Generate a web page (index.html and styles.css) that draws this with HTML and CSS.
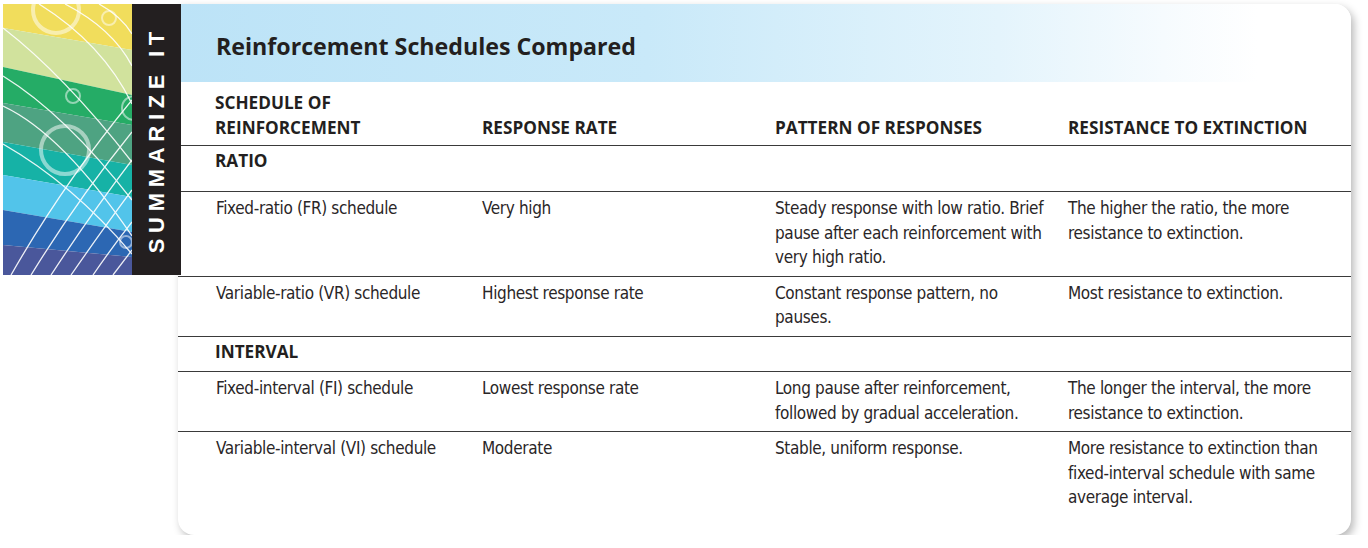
FILE: index.html
```html
<!DOCTYPE html>
<html lang="en">
<head>
<meta charset="utf-8">
<title>Reinforcement Schedules Compared</title>
<link rel="stylesheet" href="styles.css">
</head>
<body>
<div class="page">
  <aside class="badge">
    <svg class="art" viewBox="0 0 129 271" width="129" height="271" aria-hidden="true">
      <polygon fill="#f1dd5c" points="0,0 129,0 129,46 0,24"/>
      <polygon fill="#d1e29d" points="0,24 129,46 129,91 0,63"/>
      <polygon fill="#25ac66" points="0,63 129,91 129,121 0,99"/>
      <polygon fill="#4ea382" points="0,99 129,121 129,161 0,138"/>
      <polygon fill="#16b2a6" points="0,138 129,161 129,193 0,171"/>
      <polygon fill="#52c4ea" points="0,171 129,193 129,228 0,206"/>
      <polygon fill="#2c67b3" points="0,206 129,228 129,253 0,241"/>
      <polygon fill="#4a579b" points="0,241 129,253 129,271 0,271"/>
      <g fill="none" stroke="#fff" stroke-width="1.3" opacity="0.9">
        <path d="M0 24 Q 60 70 129 158"/>
        <path d="M0 72 Q 62 110 129 196"/>
        <path d="M0 102 Q 60 130 129 232"/>
        <path d="M0 140 Q 70 180 129 250"/>
        <path d="M36 0 Q 100 40 129 100"/>
        <path d="M62 0 Q 110 25 129 62"/>
        <path d="M96 0 Q 118 12 129 30"/>
        <path d="M8 271 Q 60 180 129 96"/>
        <path d="M28 271 Q 75 195 129 128"/>
        <path d="M48 271 Q 88 210 129 156"/>
        <path d="M68 271 Q 100 225 129 186"/>
        <path d="M90 271 Q 110 242 129 218"/>
        <path d="M110 271 L 129 246"/>
      </g>
      <g fill="none" stroke="#fff" opacity="0.5">
        <circle cx="53" cy="6" r="23" stroke-width="4"/>
        <circle cx="62" cy="146" r="24" stroke-width="4"/>
        <circle cx="106" cy="14" r="7" stroke-width="2"/>
        <circle cx="70" cy="92" r="7" stroke-width="2"/>
        <circle cx="131" cy="104" r="12" stroke-width="2"/>
        <circle cx="123" cy="238" r="6" stroke-width="2"/>
      </g>
    </svg>
    <div class="bar"><span class="bar-text">SUMMARIZE IT</span></div>
  </aside>
  <section class="card">
    <header class="band"><h1 class="title">Reinforcement Schedules Compared</h1></header>
    <table class="grid">
      <colgroup><col class="c1"><col class="c2"><col class="c3"><col class="c4"></colgroup>
      <thead>
        <tr>
          <th>SCHEDULE OF<br>REINFORCEMENT</th>
          <th>RESPONSE RATE</th>
          <th>PATTERN OF RESPONSES</th>
          <th>RESISTANCE TO EXTINCTION</th>
        </tr>
      </thead>
      <tbody>
        <tr class="group g-ratio"><td colspan="4">RATIO</td></tr>
        <tr>
          <td>Fixed-ratio (FR) schedule</td>
          <td>Very high</td>
          <td>Steady response with low ratio. Brief<br>pause after each reinforcement with<br>very high ratio.</td>
          <td>The higher the ratio, the more<br>resistance to extinction.</td>
        </tr>
        <tr>
          <td>Variable-ratio (VR) schedule</td>
          <td>Highest response rate</td>
          <td>Constant response pattern, no<br>pauses.</td>
          <td>Most resistance to extinction.</td>
        </tr>
        <tr class="group g-interval"><td colspan="4">INTERVAL</td></tr>
        <tr>
          <td>Fixed-interval (FI) schedule</td>
          <td>Lowest response rate</td>
          <td>Long pause after reinforcement,<br>followed by gradual acceleration.</td>
          <td>The longer the interval, the more<br>resistance to extinction.</td>
        </tr>
        <tr>
          <td>Variable-interval (VI) schedule</td>
          <td>Moderate</td>
          <td>Stable, uniform response.</td>
          <td>More resistance to extinction than<br>fixed-interval schedule with same<br>average interval.</td>
        </tr>
      </tbody>
    </table>
  </section>
</div>
</body>
</html>
```
FILE: styles.css
```css
html, body {
  margin: 0;
  background: #ffffff;
}

.page {
  display: flex;
  align-items: flex-start;
  padding: 4px 0 0 3px;
}

.badge {
  display: flex;
  flex: none;
  height: 271px;
  position: relative;
  z-index: 2;
}

.art {
  display: block;
  width: 129px;
  height: 271px;
}

.bar {
  width: 49px;
  background: #231f20;
  display: flex;
  align-items: center;
  justify-content: center;
}

.bar-text {
  writing-mode: vertical-rl;
  transform: rotate(180deg);
  font-family: "Liberation Sans", Arial, sans-serif;
  font-weight: 700;
  font-size: 22px;
  letter-spacing: 5.7px;
  color: #ffffff;
  white-space: nowrap;
}

.card {
  flex: none;
  margin-left: -3px;
  width: 1173px;
  padding-bottom: 19px;
  background: #ffffff;
  border-radius: 0 16px 16px 16px;
  box-shadow: 3px 4px 9px rgba(0, 0, 0, 0.28);
  overflow: hidden;
}

.band {
  height: 78px;
  box-sizing: border-box;
  padding: 26px 0 0 38px;
  background: linear-gradient(90deg, #bce3f7 0%, #c9e9f9 40%, #e4f4fc 70%, #f6fbfe 84%, #ffffff 92%);
}

.title {
  margin: 0;
  font-family: "Open Sans", sans-serif;
  font-weight: 700;
  font-size: 23.2px;
  line-height: 32px;
  color: #231f20;
}

.grid {
  width: 100%;
  border-collapse: collapse;
  table-layout: fixed;
  color: #231f20;
}

.c1 { width: 304px; }
.c2 { width: 293px; }
.c3 { width: 293px; }
.c4 { width: 283px; }

.grid th {
  font-family: "Open Sans", sans-serif;
  font-weight: 700;
  font-size: 17.2px;
  line-height: 24.5px;
  text-align: left;
  vertical-align: bottom;
  padding: 9px 0 5px 0;
  border-bottom: 1px solid #3a3a3a;
}

.grid th:first-child {
  padding-left: 37px;
}

.grid td {
  font-family: "DejaVu Sans Condensed", "DejaVu Sans", sans-serif;
  font-size: 17px;
  letter-spacing: -0.35px;
  line-height: 24.5px;
  vertical-align: top;
  padding: 4px 0 6px 0;
  border-bottom: 1px solid #3a3a3a;
  color: #2a2627;
}

.grid td:first-child {
  padding-left: 38px;
}

.grid tbody tr:last-child td {
  border-bottom: none;
}

.grid .group td {
  font-family: "Open Sans", sans-serif;
  font-weight: 700;
  font-size: 17.2px;
  letter-spacing: 0;
  line-height: 24px;
  padding-top: 3px;
  padding-left: 37px;
  color: #231f20;
}

.grid .g-ratio td {
  padding-bottom: 18px;
}

.grid .g-interval td {
  padding-bottom: 7.5px;
}
```
